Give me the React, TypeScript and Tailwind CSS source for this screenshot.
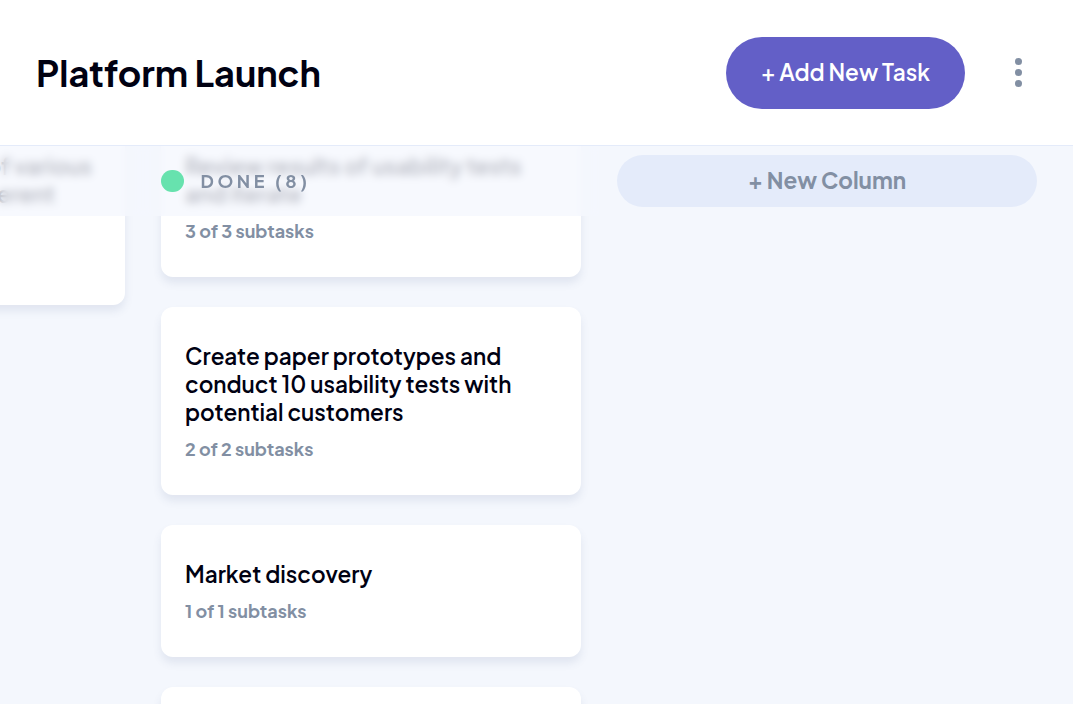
import { useLayoutEffect, useRef } from "react";

type Task = { title: string; done: number; total: number };
type Column = { name: string; color: string; tasks: Task[] };

const columns: Column[] = [
  {
    name: "DOING",
    color: "#8471F2",
    tasks: [
      { title: "Add search endpoints", done: 1, total: 2 },
      { title: "Add authentication endpoints", done: 1, total: 2 },
      {
        title: "Research pricing points of various competitors and trial different business models",
        done: 1,
        total: 3,
      },
    ],
  },
  {
    name: "DONE",
    color: "#67E2AE",
    tasks: [
      { title: "Conduct 5 wireframe tests", done: 1, total: 1 },
      { title: "Create wireframe prototype", done: 1, total: 1 },
      { title: "Review results of usability tests and iterate", done: 3, total: 3 },
      {
        title: "Create paper prototypes and conduct 10 usability tests with potential customers",
        done: 2,
        total: 2,
      },
      { title: "Market discovery", done: 1, total: 1 },
      { title: "Competitor analysis", done: 2, total: 2 },
      { title: "Research the market", done: 2, total: 2 },
      { title: "Plan launch event", done: 1, total: 1 },
    ],
  },
];

function Card({ task }: { task: Task }) {
  return (
    <div className="rounded-[12px] bg-white px-[24px] py-[34.5px] shadow-[0_6px_9px_rgba(54,78,126,0.1)]">
      <h3 className="text-[22.5px] font-semibold leading-[28px] text-[#000112]">{task.title}</h3>
      <p className="mt-[12.5px] text-[18px] font-bold leading-[22.5px] text-[#828FA3]">
        {task.done} of {task.total} subtasks
      </p>
    </div>
  );
}

function BoardColumn({ column }: { column: Column }) {
  return (
    <div className="flex w-[420px] shrink-0 flex-col">
      <div className="sticky top-0 z-10 -mx-[18px] flex h-[70px] shrink-0 items-center gap-[17px] bg-[#F4F7FD]/75 px-[18px] backdrop-blur-[4px]">
        <span className="h-[22.5px] w-[22.5px] shrink-0 rounded-full" style={{ backgroundColor: column.color }} />
        <h2 className="pt-[1px] text-[18px] font-bold leading-[22.5px] tracking-[3.6px] text-[#828FA3]">
          {column.name} ({column.tasks.length})
        </h2>
      </div>
      <div className="flex flex-col gap-[30px]">
        {column.tasks.map((t) => (
          <Card key={t.title} task={t} />
        ))}
      </div>
    </div>
  );
}

export default function App() {
  const boardRef = useRef<HTMLDivElement>(null);

  useLayoutEffect(() => {
    const el = boardRef.current;
    if (el) {
      el.scrollLeft = 10000;
      el.scrollTop = 423;
    }
  }, []);

  return (
    <div className="flex h-screen w-full flex-col overflow-hidden bg-[#F4F7FD] font-['Plus_Jakarta_Sans','Inter','Noto_Sans',sans-serif]">
      <header className="flex h-[146px] shrink-0 items-center border-b border-[#E4EBFA] bg-white pl-[36px] pr-[51px]">
        <h1 className="text-[36px] font-bold leading-[45px] text-[#000112]">Platform Launch</h1>
        <button className="ml-auto h-[72px] rounded-full bg-[#635FC7] px-[35px] text-[22.5px] font-semibold text-white">
          + Add New Task
        </button>
        <button aria-label="Board options" className="ml-[50px] flex flex-col gap-[4px]">
          <span className="h-[7px] w-[7px] rounded-full bg-[#828FA3]" />
          <span className="h-[7px] w-[7px] rounded-full bg-[#828FA3]" />
          <span className="h-[7px] w-[7px] rounded-full bg-[#828FA3]" />
        </button>
      </header>
      <div ref={boardRef} className="min-h-0 flex-1 overflow-auto [scrollbar-width:none]">
        <div className="flex w-max gap-[36px] px-[36px] pb-[36px]">
          {columns.map((c) => (
            <BoardColumn key={c.name} column={c} />
          ))}
          <div className="flex w-[420px] shrink-0 flex-col">
            <div className="sticky top-0 flex h-[70px] items-center">
              <button className="h-[52px] w-full rounded-full bg-[#E4EBFA] text-[22.5px] font-bold text-[#828FA3]">
                + New Column
              </button>
            </div>
          </div>
        </div>
      </div>
    </div>
  );
}
